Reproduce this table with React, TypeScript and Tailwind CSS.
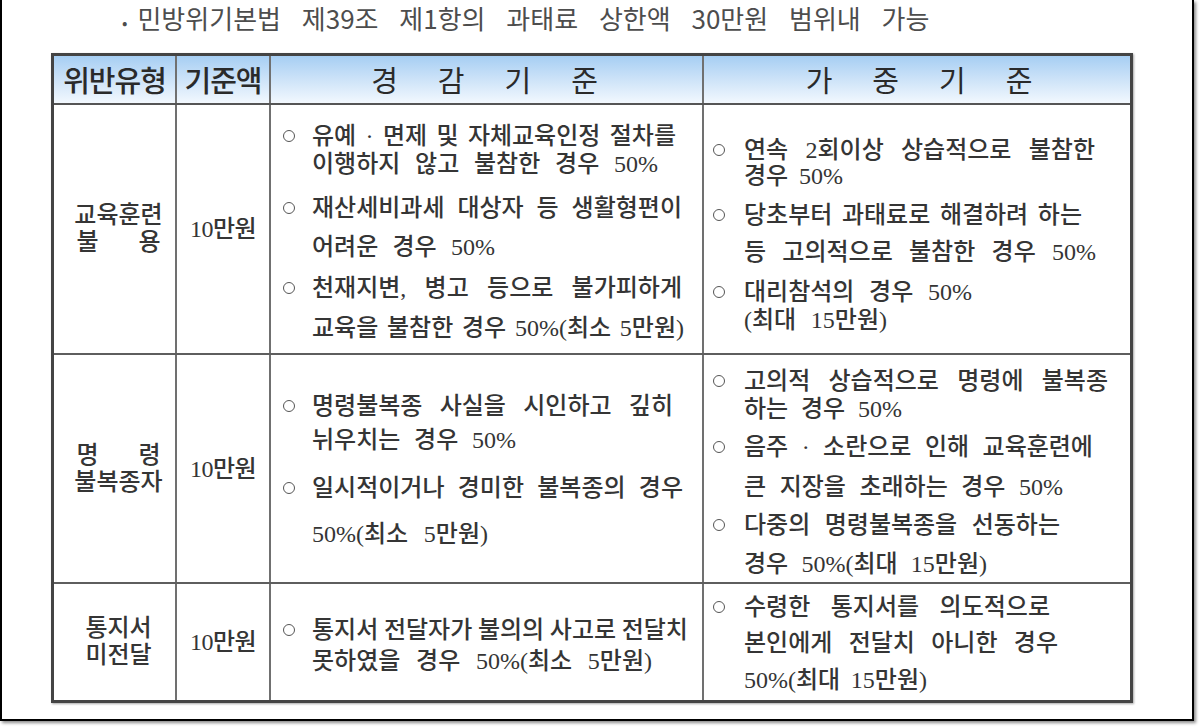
type Line = { t: string; w: string; mt: string; b?: boolean };

const SERIF = "font-['Liberation_Serif','Noto_Sans_CJK_KR',serif]";
const SANS = "font-['Noto_Sans_CJK_KR','Noto_Sans',sans-serif]";

const ROWS: {
  name: string[];
  nameJustify: boolean[];
  h: string;
  left: { pt: string; lines: Line[] };
  right: { pt: string; lines: Line[] };
}[] = [
  {
    name: ["교육훈련", "불 용"],
    nameJustify: [false, true],
    h: "h-[250px]",
    left: {
      pt: "pt-[18px]",
      lines: [
        { t: "유예 · 면제 및 자체교육인정 절차를", w: "w-[364px]", mt: "mt-0", b: true },
        { t: "이행하지 않고 불참한 경우 50%", w: "w-[346px]", mt: "mt-[2px]" },
        { t: "재산세비과세 대상자 등 생활형편이", w: "w-[370px]", mt: "mt-[18px]", b: true },
        { t: "어려운 경우 50%", w: "w-[183px]", mt: "mt-[13px]" },
        { t: "천재지변, 병고 등으로 불가피하게", w: "w-[370px]", mt: "mt-[15px]", b: true },
        { t: "교육을 불참한 경우 50%(최소 5만원)", w: "w-[372px]", mt: "mt-[14px]" },
      ],
    },
    right: {
      pt: "pt-[32px]",
      lines: [
        { t: "연속 2회이상 상습적으로 불참한", w: "w-[351px]", mt: "mt-0", b: true },
        { t: "경우 50%", w: "w-[99px]", mt: "mt-0" },
        { t: "당초부터 과태료로 해결하려 하는", w: "w-[338px]", mt: "mt-[13px]", b: true },
        { t: "등 고의적으로 불참한 경우 50%", w: "w-[352px]", mt: "mt-[11px]" },
        { t: "대리참석의 경우 50%", w: "w-[228px]", mt: "mt-[14px]", b: true },
        { t: "(최대 15만원)", w: "w-[143px]", mt: "mt-[2px]" },
      ],
    },
  },
  {
    name: ["명 령", "불복종자"],
    nameJustify: [true, false],
    h: "h-[229px]",
    left: {
      pt: "pt-[38px]",
      lines: [
        { t: "명령불복종 사실을 시인하고 깊히", w: "w-[361px]", mt: "mt-0", b: true },
        { t: "뉘우치는 경우 50%", w: "w-[204px]", mt: "mt-[8px]" },
        { t: "일시적이거나 경미한 불복종의 경우", w: "w-[371px]", mt: "mt-[22px]", b: true },
        { t: "50%(최소 5만원)", w: "w-[176px]", mt: "mt-[20px]" },
      ],
    },
    right: {
      pt: "pt-[13px]",
      lines: [
        { t: "고의적 상습적으로 명령에 불복종", w: "w-[364px]", mt: "mt-0", b: true },
        { t: "하는 경우 50%", w: "w-[158px]", mt: "mt-[2px]" },
        { t: "음주 · 소란으로 인해 교육훈련에", w: "w-[349px]", mt: "mt-[12px]", b: true },
        { t: "큰 지장을 초래하는 경우 50%", w: "w-[319px]", mt: "mt-[14px]" },
        { t: "다중의 명령불복종을 선동하는", w: "w-[316px]", mt: "mt-[12px]", b: true },
        { t: "경우 50%(최대 15만원)", w: "w-[243px]", mt: "mt-[13px]" },
      ],
    },
  },
  {
    name: ["통지서", "미전달"],
    nameJustify: [false, false],
    h: "h-[116px]",
    left: {
      pt: "pt-[33px]",
      lines: [
        { t: "통지서 전달자가 불의의 사고로 전달치", w: "w-[376px]", mt: "mt-0", b: true },
        { t: "못하였을 경우 50%(최소 5만원)", w: "w-[340px]", mt: "mt-[5px]" },
      ],
    },
    right: {
      pt: "pt-[10px]",
      lines: [
        { t: "수령한 통지서를 의도적으로", w: "w-[306px]", mt: "mt-0", b: true },
        { t: "본인에게 전달치 아니한 경우", w: "w-[314px]", mt: "mt-[10px]" },
        { t: "50%(최대 15만원)", w: "w-[183px]", mt: "mt-[11px]" },
      ],
    },
  },
];

function TextLine({ line, wide }: { line: Line; wide: boolean }) {
  return (
    <div className={`flex items-center h-[26px] ${line.mt}`}>
      <div className={`flex items-center shrink-0 ${wide ? "w-[41px] pl-[12px]" : "w-[40px] pl-[9px]"}`}>
        {line.b && <span className="block w-[12px] h-[12px] rounded-full border-[1.5px] border-[#555]" />}
      </div>
      <div className={`flex justify-between whitespace-nowrap ${line.w}`}>
        {line.t.split(" ").map((word, i) => (
          <span key={i}>{word}</span>
        ))}
      </div>
    </div>
  );
}

export default function App() {
  return (
    <div className="w-[1200px] h-[728px] bg-white overflow-hidden">
      <div className="w-[1194px] h-[721px] border-l-2 border-r-2 border-b-2 border-black shadow-[2px_2px_3px_rgba(0,0,0,0.45)] bg-white">
        {/* title line */}
        <div className={`h-[38px] leading-[36px] pl-[120px] text-[26px] text-[#4d4d4d] ${SANS} [word-spacing:15px] whitespace-nowrap`}>
          <span className="text-[16px] align-middle mr-[10px]">•</span>
          민방위기본법 제39조 제1항의 과태료 상한액 30만원 범위내 가능
        </div>

        <div className="ml-[49px] mt-[15px] w-[1082px] border-[3px] border-[#444] shadow-[1px_1px_2px_rgba(0,0,0,0.35)]">
          {/* header */}
          <div className={`grid grid-cols-[121px_94px_433px_428px] h-[49px] border-b-2 border-[#555] bg-gradient-to-b from-[#a6cef3] via-[#cde3f8] to-[#f2f8fe] text-[#2a2a2a] ${SANS}`}>
            <div className="flex items-center justify-center text-[29px] font-medium tracking-[-1px]">위반유형</div>
            <div className="flex items-center justify-center border-l-2 border-[#707070] text-[29px] font-medium tracking-[-1px]">기준액</div>
            <div className="flex items-center justify-center gap-[40px] border-l-2 border-[#707070] text-[29px] pr-[4px]">
              <span>경</span>
              <span>감</span>
              <span>기</span>
              <span>준</span>
            </div>
            <div className="flex items-center justify-center gap-[40px] border-l-2 border-[#707070] text-[29px] pl-[4px]">
              <span>가</span>
              <span>중</span>
              <span>기</span>
              <span>준</span>
            </div>
          </div>

          {ROWS.map((row, ri) => (
            <div
              key={ri}
              className={`grid grid-cols-[121px_94px_433px_428px] ${row.h} ${ri < ROWS.length - 1 ? "border-b-2 border-[#5e5e5e]" : ""} text-[24px] font-medium text-[#353535] ${SERIF}`}
            >
              <div className="flex flex-col items-center justify-center pl-[8px]">
                {row.name.map((n, i) =>
                  row.nameJustify[i] ? (
                    <div key={i} className="flex justify-between w-[84px] leading-[27px]">
                      {n.split(" ").map((c, j) => (
                        <span key={j}>{c}</span>
                      ))}
                    </div>
                  ) : (
                    <div key={i} className="leading-[27px]">
                      {n}
                    </div>
                  )
                )}
              </div>
              <div className="flex items-center justify-center border-l-2 border-[#707070] tracking-[-0.5px]">10만원</div>
              <div className={`border-l-2 border-[#707070] ${row.left.pt}`}>
                {row.left.lines.map((l, i) => (
                  <TextLine key={i} line={l} wide />
                ))}
              </div>
              <div className={`border-l-2 border-[#707070] ${row.right.pt}`}>
                {row.right.lines.map((l, i) => (
                  <TextLine key={i} line={l} wide={false} />
                ))}
              </div>
            </div>
          ))}
        </div>
      </div>
    </div>
  );
}
